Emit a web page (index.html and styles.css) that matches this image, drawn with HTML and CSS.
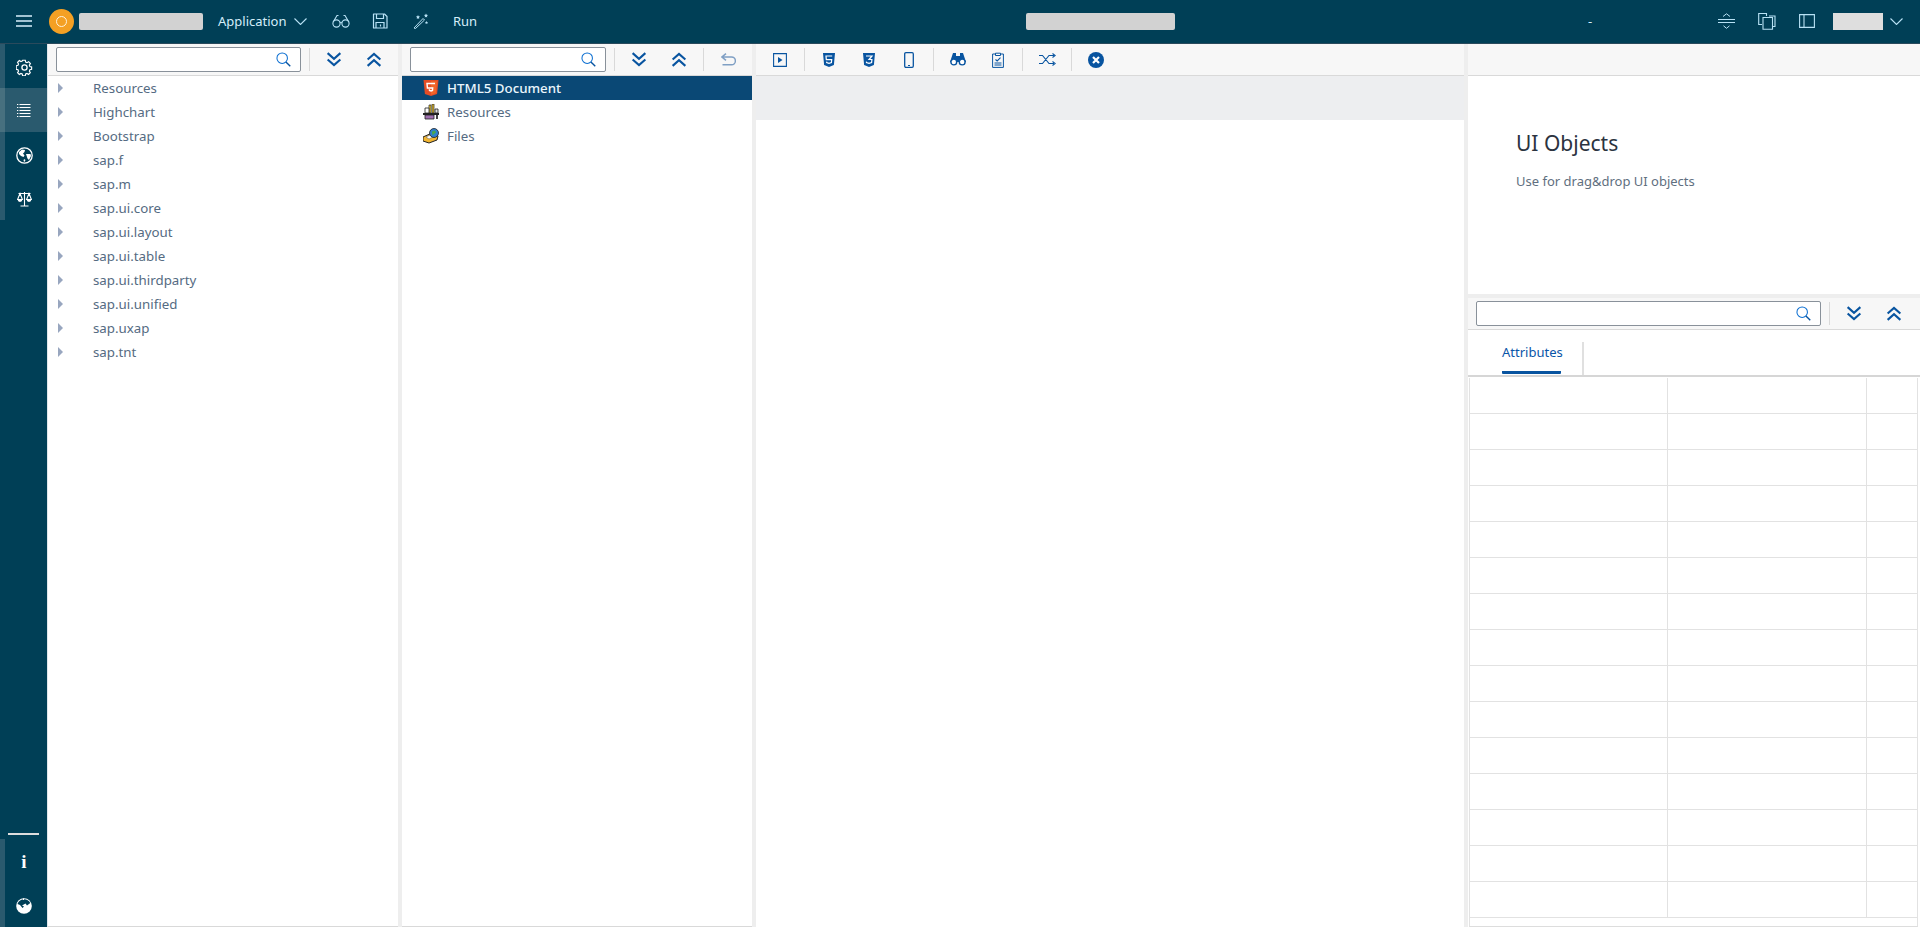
FILE: index.html
```html
<!DOCTYPE html>
<html lang="en">
<head>
<meta charset="utf-8">
<title>Application</title>
<link rel="stylesheet" href="styles.css">
</head>
<body>
<svg class="defs" width="0" height="0" aria-hidden="true">
  <symbol id="search" viewBox="0 0 16 16"><circle cx="6.6" cy="6.6" r="5.6" fill="none" stroke="#0a6ed1" stroke-width="1.1"/><path d="M10.6 10.6L15.2 15.2" stroke="#0854a0" stroke-width="1.5" fill="none"/></symbol>
  <symbol id="down2" viewBox="0 0 16 16"><path d="M1.2 1.2L8 7.200L14.800 1.200M1.200 8L8 14L14.800 8" fill="none" stroke="#0854a0" stroke-width="2.200"/></symbol>
  <symbol id="up2" viewBox="0 0 16 16"><path d="M1.200 8L8 2L14.800 8M1.200 14.800L8 8.800L14.800 14.800" fill="none" stroke="#0854a0" stroke-width="2.200"/></symbol>
</svg>

<header class="shell">
  <button class="shell-btn burger" aria-label="Menu"><svg width="16" height="12" viewBox="0 0 16 12"><path d="M0 1h16M0 6h16M0 11h16" stroke="#d8f0fb" stroke-width="1.6"/></svg></button>
  <span class="avatar"><span class="avatar-ring"></span></span>
  <span class="redact redact-name"></span>
  <span class="shell-text app">Application</span>
  <svg class="chev" width="13" height="7" viewBox="0 0 13 7"><path d="M.5.5l6 6 6-6" fill="none" stroke="#b8e2f5" stroke-width="1.1"/></svg>
  <svg class="s-ico s-glasses" width="18" height="14" viewBox="0 0 18 14"><g fill="none" stroke="#b8e2f5" stroke-width="1.1"><circle cx="4.5" cy="9.5" r="3.6"/><circle cx="13.5" cy="9.5" r="3.6"/><path d="M8 8.6q1-.8 2 0M1.2 8L5 1.5h1.5M16.8 8L13 1.5h-1.5"/></g></svg>
  <svg class="s-ico s-save" width="16" height="16" viewBox="0 0 16 16"><g fill="none" stroke="#b8e2f5" stroke-width="1.2"><path d="M1.5 1h11l2.500 2.500V15H1.500z" stroke-linejoin="round"/><path d="M4.500 1v4.500h7V1M4 15V9.500h8V15"/><path d="M8.500 11.500v2" /></g></svg>
  <svg class="s-ico s-wand" width="16" height="16" viewBox="0 0 16 16"><path d="M1 15L10 5.500l1.500 1.500L2.500 15.500z" fill="none" stroke="#b8e2f5"/><path d="M5 2l.6 1.300 1.400.2-1 1 .2 1.400L5 5.300l-1.200.6.2-1.400-1-1 1.400-.2zM13 .5l.6 1.300 1.400.2-1 1 .2 1.400-1.200-.6-1.200.6.2-1.400-1-1 1.400-.2zM13.500 8l.5 1 1 .2-.7.7.2 1.100-1-.5-1 .5.200-1.100-.7-.7 1-.2z" fill="#b8e2f5"/></svg>
  <span class="shell-text run">Run</span>
  <span class="redact redact-title"></span>
  <span class="shell-text dash">-</span>
  <svg class="s-ico s-split" width="18" height="16" viewBox="0 0 18 16"><path d="M0 6.500h17M0 9.500h17M5 3.500L8.500.800 12 3.500M5.500 12.800l3 2.500 3-2.500" fill="none" stroke="#b8e2f5" stroke-width="1"/></svg>
  <svg class="s-ico s-copy" width="18" height="17" viewBox="0 0 18 17"><g fill="none" stroke="#b8e2f5" stroke-width="1.1"><path d="M4 11.500H.700V.500h7.800v2.500"/><path d="M11 3h6v10.500h-2"/><path d="M5 4.500h9.500v11.800H5z"/></g></svg>
  <svg class="s-ico s-panel" width="16" height="14" viewBox="0 0 16 14"><path d="M.6.600h14.800v12.800H.6zM5 .600v12.800" fill="none" stroke="#b8e2f5" stroke-width="1.1"/></svg>
  <span class="redact redact-user"></span>
  <svg class="chev chev-user" width="13" height="7" viewBox="0 0 13 7"><path d="M.5.500l6 6 6-6" fill="none" stroke="#b8e2f5" stroke-width="1.100"/></svg>
</header>

<main class="workspace">
  <nav class="rail">
    <div class="rail-group">
      <a class="rail-item"><svg width="17" height="17" viewBox="0 0 17 17"><g fill="none" stroke="#fff" stroke-width="1.300"><circle cx="8.500" cy="8.500" r="2.600"/><path d="M7 .8h3l.4 2.100 1.500.7 1.900-1.100 2 2.200-1.200 1.700.6 1.500 2 .5v2.800l-2 .5-.6 1.500 1.100 1.800-2 2-1.800-1.100-1.500.6-.4 2H7l-.5-2-1.500-.6-1.800 1.100-2-2 1.100-1.800-.6-1.500-2-.5V7.100l2-.5.600-1.500L1.200 3.300l2-2.100L5 2.300l1.500-.6z" transform="translate(.5 .5) scale(.88)"/></g></svg></a>
      <a class="rail-item is-active"><svg width="14" height="14" viewBox="0 0 14 14"><path d="M2.500 .5h11M2.500 3.500h11M2.500 6.500h11M2.500 9.500h11M2.500 12.500h11" stroke="#fff"/><path d="M0 .5h1.300M0 3.500h1.300M0 6.500h1.300M0 9.500h1.300M0 12.500h1.300" stroke="#fff"/></svg></a>
      <a class="rail-item"><svg width="17" height="17" viewBox="0 0 17 17"><circle cx="8.500" cy="8.500" r="7.700" fill="none" stroke="#fff" stroke-width="1.300"/><path d="M3 5l3-2.500 3 .5-.5 2L7 6.500l1.500 2-1 1.500L5 9 3 7zM10 7h4.500l.5 2-2 4-1.500-1.500zM8 12l1.500 1L8.500 15 7.500 14z" fill="#fff"/></svg></a>
      <a class="rail-item"><svg width="15" height="16" viewBox="0 0 15 16"><g fill="none" stroke="#fff" stroke-width="1.100"><path d="M7.500 1v13.500M3.500 15h8M1.500 2.500h12"/><path d="M3 2.500L.6 8.500h4.800zM12 2.500L9.600 8.500h4.800z"/></g><path d="M.6 8.500h4.800a2.400 2.400 0 0 1-4.800 0zM9.600 8.500h4.800a2.400 2.400 0 0 1-4.800 0z" fill="#fff"/></svg></a>
    </div>
    <div class="rail-spacer"></div>
    <div class="rail-rule"></div>
    <div class="rail-group rail-bottom">
      <a class="rail-item rail-info">i</a>
      <a class="rail-item"><svg width="16" height="16" viewBox="0 0 16 16"><circle cx="8" cy="8" r="7.800" fill="#fff"/><path d="M1.500 6Q3 1.800 7.500 1.300 12 1 14.300 5L11 7.500 9.500 5.500 6 7.500 8 8.500 6.500 10 4 7z" fill="#003f56"/><path d="M7.500 .4v1.600" stroke="#fff"/></svg></a>
    </div>
  </nav>

  <section class="panel panel-lib">
    <div class="toolbar">
      <div class="search search-lib"><svg class="search-ico" width="15" height="15"><use href="#search"/></svg></div>
      <span class="sep"></span>
      <button class="tbtn"><svg width="16" height="15"><use href="#down2"/></svg></button>
      <button class="tbtn"><svg width="16" height="15"><use href="#up2"/></svg></button>
    </div>
    <ul class="tree">
      <li class="tree-row"><span class="caret"></span>Resources</li>
      <li class="tree-row"><span class="caret"></span>Highchart</li>
      <li class="tree-row"><span class="caret"></span>Bootstrap</li>
      <li class="tree-row"><span class="caret"></span>sap.f</li>
      <li class="tree-row"><span class="caret"></span>sap.m</li>
      <li class="tree-row"><span class="caret"></span>sap.ui.core</li>
      <li class="tree-row"><span class="caret"></span>sap.ui.layout</li>
      <li class="tree-row"><span class="caret"></span>sap.ui.table</li>
      <li class="tree-row"><span class="caret"></span>sap.ui.thirdparty</li>
      <li class="tree-row"><span class="caret"></span>sap.ui.unified</li>
      <li class="tree-row"><span class="caret"></span>sap.uxap</li>
      <li class="tree-row"><span class="caret"></span>sap.tnt</li>
    </ul>
  </section>

  <section class="panel panel-doc">
    <div class="toolbar">
      <div class="search search-doc"><svg class="search-ico" width="15" height="15"><use href="#search"/></svg></div>
      <span class="sep"></span>
      <button class="tbtn"><svg width="16" height="15"><use href="#down2"/></svg></button>
      <button class="tbtn"><svg width="16" height="15"><use href="#up2"/></svg></button>
      <span class="sep"></span>
      <button class="tbtn"><svg width="15" height="13" viewBox="0 0 15 13"><path d="M5 .7L1 4l4 3.300M1.500 4h9a3.500 3.500 0 0 1 0 7.800H1.500" fill="none" stroke="#7f9fc4" stroke-width="1.500"/></svg></button>
    </div>
    <ul class="doc-tree">
      <li class="doc-row is-selected"><svg class="doc-ico" width="15" height="16" viewBox="0 0 15 16"><path d="M0 0h15l-1.400 14L7.500 16 1.400 14z" fill="#e44d26"/><path d="M7.500 1.200h6l-1.100 12L7.500 14.800z" fill="#f16529"/><path d="M11.500 3.500h-8l.4 4.500h5.300l-.2 2.400-1.500.5-1.500-.5-.1-1.200" fill="none" stroke="#fff" stroke-width="1.400"/></svg>HTML5 Document</li>
      <li class="doc-row"><svg class="doc-ico" width="16" height="16" viewBox="0 0 16 16"><path d="M0 9h16v2H0z" fill="#222"/><path d="M2 11h9v4H2z" fill="#a070b0" stroke="#222" stroke-width=".8"/><path d="M6 1h2v8H6z" fill="#f4d33a" stroke="#222" stroke-width=".7"/><path d="M9 0h2v9H9z" fill="#e8c030" stroke="#222" stroke-width=".7"/><path d="M2 4h4v5H2z" fill="#fff" stroke="#222" stroke-width=".8"/><path d="M12 5h3v4h-3z" fill="#ddd" stroke="#222" stroke-width=".8"/><path d="M13 11h2v4h-2z" fill="#444"/></svg>Resources</li>
      <li class="doc-row"><svg class="doc-ico" width="16" height="16" viewBox="0 0 16 16"><path d="M0 9l9-4 6 3-1 4-8 3-6-2z" fill="#f2b632" stroke="#222"/><path d="M3 9l6-3 3 2-6 3z" fill="#fff" stroke="#555" stroke-width=".5"/><circle cx="11" cy="5" r="4.500" fill="#2f7fcf" stroke="#222" stroke-width=".8"/><path d="M9 3.500l3-1 1 2-2 1.500-1.500 1.500z" fill="#4aa84a"/></svg>Files</li>
    </ul>
  </section>

  <section class="panel panel-canvas">
    <div class="toolbar">
      <button class="tbtn"><svg width="14" height="14" viewBox="0 0 14 14"><path d="M.6.600h12.800v12.800H.6z" fill="none" stroke="#0854a0" stroke-width="1.100"/><path d="M5 4l4.500 3L5 10z" fill="#0854a0"/></svg></button>
      <span class="sep"></span>
      <button class="tbtn"><svg width="12" height="14" viewBox="0 0 12 14"><path d="M0 0h12l-1.100 12L6 14l-4.900-2z" fill="#0854a0"/><path d="M9.200 3H3l.3 3.600h5.400l-.3 3L6 10.300l-2.300-.7-.1-1" fill="none" stroke="#fff" stroke-width="1.200"/></svg></button>
      <button class="tbtn"><svg width="12" height="14" viewBox="0 0 12 14"><path d="M0 0h12l-1.100 12L6 14l-4.900-2z" fill="#0854a0"/><path d="M3 3h6L6 6.500h2.900l-.3 3L6 10.300l-2.500-.7-.1-1" fill="none" stroke="#fff" stroke-width="1.200"/></svg></button>
      <button class="tbtn"><svg width="10" height="16" viewBox="0 0 10 16"><rect x=".7" y=".7" width="8.600" height="14.600" rx="1.200" fill="none" stroke="#0854a0" stroke-width="1.300"/><path d="M4 13.500h2" stroke="#0854a0"/></svg></button>
      <span class="sep"></span>
      <button class="tbtn"><svg width="16" height="13" viewBox="0 0 16 13"><g fill="#0854a0"><path d="M3 0h3v3h4V0h3l3 9H0z"/></g><circle cx="3.800" cy="9" r="2.900" fill="#fff" stroke="#0854a0" stroke-width="1.400"/><circle cx="12.200" cy="9" r="2.900" fill="#fff" stroke="#0854a0" stroke-width="1.400"/></svg></button>
      <button class="tbtn"><svg width="12" height="16" viewBox="0 0 12 16"><path d="M3.500 2H.6v13.400h10.800V2H8.500M3.500 1.200h5v2.300h-5zM2.500 11h7M2.500 13h7" fill="none" stroke="#0854a0"/><path d="M3.500 7.500L5.200 9l3.300-3.300" fill="none" stroke="#0854a0" stroke-width="1.100"/></svg></button>
      <span class="sep"></span>
      <button class="tbtn"><svg width="17" height="13" viewBox="0 0 17 13"><path d="M0 2.500h3.500L10 10.500h5M0 10.500h3.500L10 2.500h5M13.500.5l2.700 2-2.700 2M13.500 8.500l2.700 2-2.700 2" fill="none" stroke="#0854a0" stroke-width="1.100"/></svg></button>
      <span class="sep"></span>
      <button class="tbtn"><svg width="16" height="16" viewBox="0 0 16 16"><circle cx="8" cy="8" r="8" fill="#0854a0"/><path d="M5 5l6 6M11 5l-6 6" stroke="#fff" stroke-width="2.200"/></svg></button>
    </div>
    <div class="canvas-band"></div>
    <div class="canvas-body"></div>
  </section>

  <section class="panel panel-props">
    <div class="toolbar"></div>
    <div class="intro">
      <h1 class="intro-title">UI Objects</h1>
      <p class="intro-text">Use for drag&amp;drop UI objects</p>
    </div>
    <div class="props-gap"></div>
    <div class="toolbar">
      <div class="search search-props"><svg class="search-ico" width="15" height="15"><use href="#search"/></svg></div>
      <span class="sep"></span>
      <button class="tbtn"><svg width="16" height="15"><use href="#down2"/></svg></button>
      <button class="tbtn"><svg width="16" height="15"><use href="#up2"/></svg></button>
    </div>
    <div class="tabs">
      <span class="tab">Attributes</span>
      <span class="tab-sep"></span>
    </div>
    <div class="grid-wrap">
      <div class="grid-table">
        <div class="cell"></div><div class="cell"></div><div class="cell"></div>
        <div class="cell"></div><div class="cell"></div><div class="cell"></div>
        <div class="cell"></div><div class="cell"></div><div class="cell"></div>
        <div class="cell"></div><div class="cell"></div><div class="cell"></div>
        <div class="cell"></div><div class="cell"></div><div class="cell"></div>
        <div class="cell"></div><div class="cell"></div><div class="cell"></div>
        <div class="cell"></div><div class="cell"></div><div class="cell"></div>
        <div class="cell"></div><div class="cell"></div><div class="cell"></div>
        <div class="cell"></div><div class="cell"></div><div class="cell"></div>
        <div class="cell"></div><div class="cell"></div><div class="cell"></div>
        <div class="cell"></div><div class="cell"></div><div class="cell"></div>
        <div class="cell"></div><div class="cell"></div><div class="cell"></div>
        <div class="cell"></div><div class="cell"></div><div class="cell"></div>
        <div class="cell"></div><div class="cell"></div><div class="cell"></div>
        <div class="cell"></div><div class="cell"></div><div class="cell"></div>
      </div>
    </div>
  </section>
</main>
</body>
</html>
```

FILE: styles.css
```css
* { box-sizing: border-box; }
html, body { margin: 0; height: 100%; overflow: hidden; }
body {
  display: flex;
  flex-direction: column;
  background: #eeeeee;
  font-family: "Noto Sans", "Liberation Sans", sans-serif;
  font-size: 13px;
  color: #556b82;
}
.defs { display: block; height: 0; }
ul { list-style: none; margin: 0; padding: 0; }
button { border: 0; background: none; padding: 0; font: inherit; }

/* shell bar */
.shell {
  flex: 0 0 44px;
  display: flex;
  align-items: center;
  background: #003f56;
  border-bottom: 1px solid #2a4a5c;
  padding-bottom: 1px;
}
.shell-btn { display: flex; }
.burger { margin-left: 16px; }
.avatar {
  width: 25px; height: 25px; margin-left: 17px;
  border-radius: 50%;
  background: #f4a024;
  display: flex; align-items: center; justify-content: center;
}
.avatar-ring { width: 11px; height: 11px; border-radius: 50%; border: 1px solid #fff3dd; }
.redact { display: block; height: 17px; background: #d2d2d2; border-radius: 2px; }
.redact-name { width: 124px; margin-left: 5px; }
.shell-text { color: #d5eefa; font-size: 13px; line-height: 17px; padding-top: 1px; }
.app { margin-left: 15px; width: 68px; white-space: nowrap; }
.chev { margin-left: 8px; flex: none; }
.s-ico { flex: none; }
.s-glasses { margin-left: 25px; }
.s-save { margin-left: 22px; }
.s-wand { margin-left: 25px; }
.run { margin-left: 24px; width: 24px; }
.redact-title { width: 149px; margin-left: 549px; }
.dash { margin-left: 413px; width: 8px; }
.s-split { margin-left: 122px; }
.s-copy { margin-left: 22px; }
.s-panel { margin-left: 23px; }
.redact-user { width: 50px; height: 17px; margin-left: 18px; background: #dedede; border-radius: 0; }
.chev-user { margin-left: 7px; }

/* workspace */
.workspace {
  flex: 1;
  min-height: 0;
  display: grid;
  grid-template-columns: 47px 351px 354px 712px 456px;
}
.rail {
  background: #003f56;
  display: flex;
  flex-direction: column;
}
.rail-group { border-left: 5px solid #2a5a6e; }
.rail-item {
  display: flex; align-items: center; justify-content: center;
  height: 44px;
  margin-left: -5px;
  padding: 2px 0 0 1px;
}
.rail-item.is-active { background: #2a5a6e; box-shadow: inset 5px 0 0 #47707f; }
.rail-spacer { flex: 1; }
.rail-rule { height: 2px; margin: 0 8px 4px 8px; background: #dddddd; }
.rail-bottom { height: 88px; }
.rail-info { color: #fff; font-family: "Liberation Serif", serif; font-size: 19px; font-weight: 700; }

.panel { display: flex; flex-direction: column; background: #fff; min-width: 0; min-height: 0; }
.panel-lib { border-bottom: 1px solid #d9d9d9; border-left: 1px solid #dfe6ea; }
.panel-doc { margin-left: 4px; border-bottom: 1px solid #d9d9d9; }
.panel-canvas { margin-left: 4px; }
.panel-props { margin-left: 4px; }

.toolbar {
  flex: 0 0 32px;
  display: flex;
  align-items: center;
  height: 32px;
  background: #f7f7f7;
  border-bottom: 1px solid #d9d9d9;
}
.search {
  height: 25px;
  margin: 0 4px 0 8px;
  background: #fff;
  border: 1px solid #89919a;
  border-radius: 2px;
  display: flex; align-items: center; justify-content: flex-end;
  padding-right: 9px;
}
.search-lib { width: 245px; margin-left: 8px; }
.search-doc { width: 196px; }
.search-props { width: 345px; }
.sep { width: 1px; height: 23px; margin: 0 4px; background: #d9d9d9; flex: none; }
.tbtn { width: 40px; height: 24px; display: flex; align-items: center; justify-content: center; flex: none; }
.panel-canvas .toolbar { padding-left: 4px; }

.tree, .doc-tree { flex: 1; background: #fff; }
.tree-row {
  height: 24px; line-height: 24px;
  display: flex; align-items: center;
  padding-left: 10px;
  white-space: nowrap;
  font-size: 13.3px;
}
.caret {
  width: 0; height: 0;
  margin-right: 30px;
  border-left: 5px solid #98a6bf;
  border-top: 5px solid transparent;
  border-bottom: 5px solid transparent;
}
.doc-row {
  height: 24px;
  display: flex; align-items: center;
  padding-left: 21px;
  white-space: nowrap;
  font-size: 13.3px;
}
.doc-ico { width: 16px; margin-right: 8px; flex: none; }
.doc-row.is-selected { background: #0a4875; color: #eaf6fd; font-weight: 500; }

.canvas-band { height: 44px; background: #edeef0; flex: none; }
.canvas-body { flex: 1; background: #fff; }

.intro { flex: 0 0 218px; padding: 52px 0 0 48px; background: #fff; }
.intro-title { margin: 0; font-size: 21px; line-height: 30px; font-weight: 400; color: #2b3340; }
.intro-text { margin: 14px 0 0; font-size: 13px; line-height: 18px; color: #5f6f80; }
.props-gap { flex: 0 0 4px; background: #eeeeee; }

.tabs {
  flex: 0 0 47px;
  display: flex;
  align-items: flex-start;
  padding: 12px 0 0 34px;
  background: #fff;
  border-bottom: 2px solid #d6d6d6;
}
.tab {
  width: 59px;
  height: 32px;
  color: #0a55a8;
  line-height: 20px;
  border-bottom: 3px solid #0854a0;
  border-radius: 0 0 1px 1px;
  white-space: nowrap;
}
.tab-sep { width: 2px; height: 33px; margin-left: 21px; background: #e0e0e0; }

.grid-wrap { flex: 1; min-height: 0; padding: 1px 2px 0 1px; background: #fff; }
.grid-table {
  height: 100%;
  display: grid;
  grid-template-columns: 198px 199px 1fr;
  grid-auto-rows: 36px;
  border-left: 1px solid #e2e2e2;
  border-right: 1px solid #e2e2e2;
  border-bottom: 1px solid #dddddd;
}
.cell { border-right: 1px solid #e2e2e2; border-bottom: 1px solid #e2e2e2; }
.cell:nth-child(3n) { border-right: 0; }
```
